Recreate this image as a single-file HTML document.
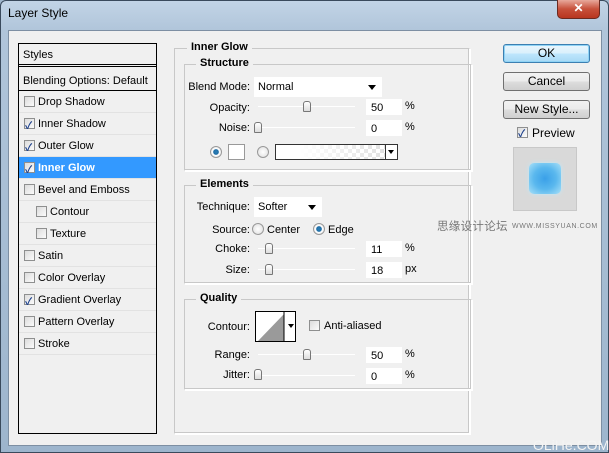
<!DOCTYPE html>
<html><head><meta charset="utf-8"><style>
*{margin:0;padding:0;box-sizing:border-box}
body{width:609px;height:453px;overflow:hidden;font-family:Tahoma,"Liberation Sans","Noto Sans CJK SC",sans-serif;font-size:11px;color:#000;position:relative;background:#9fb6cc}
.a{position:absolute}
.frame{left:0;top:0;width:609px;height:453px;background:linear-gradient(180deg,#c2d4e6 0,#b0c5da 30px,#9db5cd 100%);border:1px solid #3a4a5c;border-radius:6px 6px 0 0}
.title{left:8px;top:6px;font-size:12px;font-family:"Liberation Sans",sans-serif;color:#000}
.close{left:557px;top:0;width:43px;height:19px;background:linear-gradient(#e8a99b,#c7503a 50%,#b8361f);border:1px solid #6b2a20;border-top:none;border-radius:0 0 5px 5px;color:#fff;font-weight:bold;text-align:center;font-size:12px;line-height:17px}
.body{left:8px;top:30px;width:594px;height:416px;background:#f0f0f0;border:1px solid #7d8fa3}
.list{left:18px;top:43px;width:139px;height:391px;background:#f0f0f0;border:1px solid #000}
.row{position:absolute;left:0;width:137px;height:22px;border-bottom:1px solid #e2e2e2;line-height:22px;padding-left:19px;font-size:11px}
.cb{position:absolute;width:11px;height:11px;border:1px solid #8e8f8f;background:linear-gradient(135deg,#dcdcdc,#fbfbfb)}
.cb.on::after{content:"✓";position:absolute;left:0px;top:-3px;font-size:10px;color:#1b3f8b;font-weight:bold}
.grp{position:absolute;border:1px solid #c8c8c8;border-right-color:#fff;border-bottom-color:#fff;box-shadow:inset -1px -1px 0 #c8c8c8,1px 1px 0 #fff}
.leg{position:absolute;background:#f0f0f0;font-weight:bold;padding:0 4px;font-size:11px}
.lbl{position:absolute;text-align:right;font-size:11px}
.inp{position:absolute;background:#fff;height:16px;font-size:11px;padding-left:5px;line-height:18px}
.sl{position:absolute;height:1px;background:#aaa;border-bottom:1px solid #fff}
.th{position:absolute;width:8px;height:11px;border:1px solid #777;border-radius:3px 3px 1px 1px;background:linear-gradient(#fff,#ddd)}
.btn{position:absolute;left:503px;width:87px;height:19px;border:1px solid #707070;border-radius:3px;background:linear-gradient(#f2f2f2 0,#ebebeb 50%,#dddddd 51%,#cfcfcf);text-align:center;line-height:17px;font-size:12px;font-family:"Liberation Sans",sans-serif}
.rad{position:absolute;width:12px;height:12px;border-radius:50%;border:1px solid #999;background:radial-gradient(#fff,#ddd)}
.rad.on{background:radial-gradient(#2d7fb8 0,#1f6ea6 35%,#fff 45%,#ddd)}
.dd{position:absolute;background:#fff;height:20px;padding-left:4px;line-height:21px}
.dd::after{content:"";position:absolute;right:6px;top:8px;border:4px solid transparent;border-top:5px solid #000}
</style></head><body>
<div class="a frame"></div>
<div class="a title">Layer Style</div>
<div class="a close">✕</div>
<div class="a body"></div>

<div class="a list">
 <div class="row" style="top:0;height:23px;padding-left:4px;line-height:23px;border-bottom:3px double #000">Styles</div>
 <div class="row" style="top:26px;padding-left:4px;border-bottom:1px solid #000;height:21px">Blending Options: Default</div>
 <div class="row" style="top:47px"><span class="cb" style="left:5px;top:5px"></span>Drop Shadow</div>
 <div class="row" style="top:69px"><span class="cb on" style="left:5px;top:5px"></span>Inner Shadow</div>
 <div class="row" style="top:91px"><span class="cb on" style="left:5px;top:5px"></span>Outer Glow</div>
 <div class="row" style="top:113px;background:#3399ff;color:#fff;font-weight:bold"><span class="cb on" style="left:5px;top:5px"></span>Inner Glow</div>
 <div class="row" style="top:135px"><span class="cb" style="left:5px;top:5px"></span>Bevel and Emboss</div>
 <div class="row" style="top:157px;padding-left:31px"><span class="cb" style="left:17px;top:5px"></span>Contour</div>
 <div class="row" style="top:179px;padding-left:31px"><span class="cb" style="left:17px;top:5px"></span>Texture</div>
 <div class="row" style="top:201px"><span class="cb" style="left:5px;top:5px"></span>Satin</div>
 <div class="row" style="top:223px"><span class="cb" style="left:5px;top:5px"></span>Color Overlay</div>
 <div class="row" style="top:245px"><span class="cb on" style="left:5px;top:5px"></span>Gradient Overlay</div>
 <div class="row" style="top:267px"><span class="cb" style="left:5px;top:5px"></span>Pattern Overlay</div>
 <div class="row" style="top:289px"><span class="cb" style="left:5px;top:5px"></span>Stroke</div>
</div>

<div class="grp" style="left:174px;top:48px;width:296px;height:386px"></div>
<div class="leg" style="left:187px;top:41px">Inner Glow</div>

<div class="grp" style="left:184px;top:64px;width:288px;height:107px"></div>
<div class="leg" style="left:196px;top:57px">Structure</div>
<div class="lbl" style="left:186px;top:81px;width:64px">Blend Mode:</div>
<div class="dd" style="left:254px;top:77px;width:128px">Normal</div>
<div class="lbl" style="left:190px;top:102px;width:60px">Opacity:</div>
<div class="sl" style="left:258px;top:106px;width:97px"></div><div class="th" style="left:303px;top:101px"></div>
<div class="inp" style="left:366px;top:99px;width:36px">50</div><div class="a" style="left:405px;top:100px">%</div>
<div class="lbl" style="left:190px;top:122px;width:60px">Noise:</div>
<div class="sl" style="left:258px;top:127px;width:97px"></div><div class="th" style="left:254px;top:122px"></div>
<div class="inp" style="left:366px;top:120px;width:36px">0</div><div class="a" style="left:405px;top:121px">%</div>
<div class="rad on" style="left:210px;top:146px"></div>
<div class="a" style="left:228px;top:144px;width:17px;height:16px;background:#fff;border:1px solid #999"></div>
<div class="rad" style="left:257px;top:146px"></div>
<div class="a" style="left:275px;top:144px;width:123px;height:16px;border:1px solid #333;background:linear-gradient(90deg,#fff 20%,rgba(255,255,255,0)),repeating-conic-gradient(#ddd 0 25%,#fff 0 50%) 0 0/8px 8px"></div>
<div class="a" style="left:385px;top:144px;width:13px;height:16px;border:1px solid #333;background:#fff"></div>
<div class="a" style="left:388px;top:150px;border:3px solid transparent;border-top:4px solid #000"></div>

<div class="grp" style="left:184px;top:185px;width:288px;height:99px"></div>
<div class="leg" style="left:196px;top:178px">Elements</div>
<div class="lbl" style="left:186px;top:201px;width:64px">Technique:</div>
<div class="dd" style="left:254px;top:197px;width:68px">Softer</div>
<div class="lbl" style="left:190px;top:224px;width:60px">Source:</div>
<div class="rad" style="left:252px;top:223px"></div><div class="a" style="left:267px;top:224px">Center</div>
<div class="rad on" style="left:313px;top:223px"></div><div class="a" style="left:328px;top:224px">Edge</div>
<div class="lbl" style="left:190px;top:243px;width:60px">Choke:</div>
<div class="sl" style="left:258px;top:248px;width:97px"></div><div class="th" style="left:265px;top:243px"></div>
<div class="inp" style="left:366px;top:241px;width:36px">11</div><div class="a" style="left:405px;top:242px">%</div>
<div class="lbl" style="left:190px;top:264px;width:60px">Size:</div>
<div class="sl" style="left:258px;top:269px;width:97px"></div><div class="th" style="left:265px;top:264px"></div>
<div class="inp" style="left:366px;top:262px;width:36px">18</div><div class="a" style="left:405px;top:263px">px</div>

<div class="grp" style="left:184px;top:299px;width:288px;height:91px"></div>
<div class="leg" style="left:196px;top:292px">Quality</div>
<div class="lbl" style="left:190px;top:321px;width:60px">Contour:</div>
<div class="a" style="left:255px;top:311px;width:41px;height:31px;border:1px solid #000;background:#fff;overflow:hidden">
<svg width="41" height="31"><polygon points="2,29 28,2 28,29" fill="#9a9a9a"/><line x1="28" y1="0" x2="28" y2="31" stroke="#000"/><polygon points="32,12 38,12 35,16" fill="#000"/></svg></div>
<span class="cb" style="left:309px;top:320px"></span><div class="a" style="left:324px;top:320px">Anti-aliased</div>
<div class="lbl" style="left:190px;top:349px;width:60px">Range:</div>
<div class="sl" style="left:258px;top:354px;width:97px"></div><div class="th" style="left:303px;top:349px"></div>
<div class="inp" style="left:366px;top:347px;width:36px">50</div><div class="a" style="left:405px;top:348px">%</div>
<div class="lbl" style="left:190px;top:369px;width:60px">Jitter:</div>
<div class="sl" style="left:258px;top:375px;width:97px"></div><div class="th" style="left:254px;top:369px"></div>
<div class="inp" style="left:366px;top:368px;width:36px">0</div><div class="a" style="left:405px;top:369px">%</div>

<div class="btn" style="top:44px;border-color:#3c7fb1;box-shadow:inset 0 0 0 1px #8fd3f5;background:linear-gradient(#eaf6fd,#d9f0fc 50%,#bee6fd 51%,#a7d9f5)">OK</div>
<div class="btn" style="top:72px">Cancel</div>
<div class="btn" style="top:100px">New Style...</div>
<span class="cb on" style="left:517px;top:127px"></span><div class="a" style="left:532px;top:126px;font-size:12px;font-family:'Liberation Sans',sans-serif">Preview</div>
<div class="a" style="left:513px;top:147px;width:64px;height:64px;background:#d9d9d9;border:1px solid #c8c8c8"></div>
<div class="a" style="left:529px;top:163px;width:32px;height:31px;border-radius:5px;background:radial-gradient(#3aa0e8 0,#5ab8ee 50%,#a8e0f8 100%);box-shadow:0 0 4px #bfe8fa"></div>

<div class="a" style="left:437px;top:218px;font-size:11.5px;color:#777;font-family:'Noto Sans CJK SC',sans-serif;letter-spacing:0.3px">思缘设计论坛</div>
<div class="a" style="left:512px;top:223px;font-size:7px;color:#777;letter-spacing:0.6px">WWW.MISSYUAN.COM</div>
<div class="a" style="left:533px;top:437px;font-size:14px;color:#f4f4f4">OLiHe.COM</div>
</body></html>
